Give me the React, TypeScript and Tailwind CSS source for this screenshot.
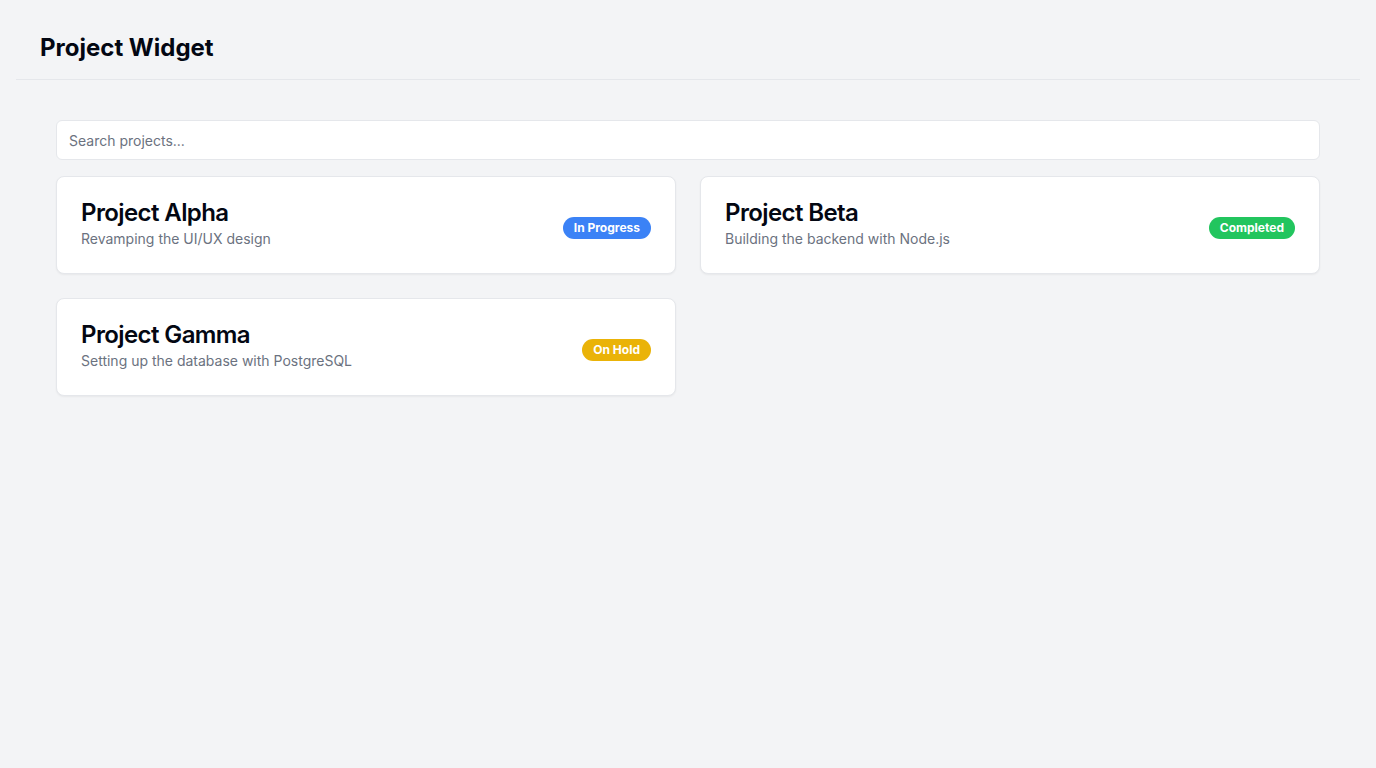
import React from "react";

const projects = [
  { name: "Project Alpha", desc: "Revamping the UI/UX design", status: "In Progress", color: "bg-[#3b82f6]" },
  { name: "Project Beta", desc: "Building the backend with Node.js", status: "Completed", color: "bg-[#22c55e]" },
  { name: "Project Gamma", desc: "Setting up the database with PostgreSQL", status: "On Hold", color: "bg-[#eab308]" },
];

export default function App() {
  return (
    <div className="min-h-screen bg-[#f3f4f6] p-4 text-[#030712]" style={{ fontFamily: "Inter, 'Noto Sans', sans-serif" }}>
      <header className="border-b border-[#e5e7eb] px-6 pt-4 pb-[15px]">
        <h1 className="text-2xl font-bold leading-8">Project Widget</h1>
      </header>
      <main className="px-10 pt-10">
        <input
          type="text"
          placeholder="Search projects..."
          className="mb-4 h-10 w-full rounded-md border border-[#e5e7eb] bg-white px-3 text-sm text-gray-900 placeholder:text-[#6b7280] outline-none"
        />
        <div className="grid grid-cols-2 gap-6">
          {projects.map((p) => (
            <div key={p.name} className="flex items-center justify-between rounded-lg border border-[#e5e7eb] bg-white p-6 shadow-xs">
              <div className="flex flex-col gap-1">
                <h2 className="text-2xl font-semibold leading-6 tracking-tight">{p.name}</h2>
                <p className="text-sm leading-5 text-[#6b7280]">{p.desc}</p>
              </div>
              <span className={`mt-1.5 rounded-full px-[11px] py-0.5 text-xs font-bold leading-[18px] text-white ${p.color}`}>{p.status}</span>
            </div>
          ))}
        </div>
      </main>
    </div>
  );
}
